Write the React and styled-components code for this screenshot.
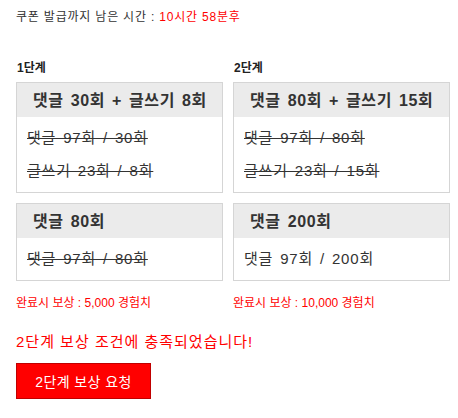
import React from "react";
import styled, { createGlobalStyle } from "styled-components";

const GlobalStyle = createGlobalStyle`
  body {
    margin: 0;
    background: #fff;
    font-family: "Liberation Sans", "Noto Sans CJK KR", sans-serif;
    color: #333;
  }
`;

const stages = [
  {
    label: "1단계",
    width: 207,
    reward: "5,000",
    missions: [
      {
        title: "댓글 30회 + 글쓰기 8회",
        lines: [
          { text: "댓글 97회 / 30회", done: true },
          { text: "글쓰기 23회 / 8회", done: true },
        ],
      },
      {
        title: "댓글 80회",
        lines: [{ text: "댓글 97회 / 80회", done: true }],
      },
    ],
  },
  {
    label: "2단계",
    width: 217,
    reward: "10,000",
    missions: [
      {
        title: "댓글 80회 + 글쓰기 15회",
        lines: [
          { text: "댓글 97회 / 80회", done: true },
          { text: "글쓰기 23회 / 15회", done: true },
        ],
      },
      {
        title: "댓글 200회",
        lines: [{ text: "댓글 97회 / 200회", done: false }],
      },
    ],
  },
];

const App = () => {
  return (
    <Page>
      <GlobalStyle />
      <Timer>
        쿠폰 발급까지 남은 시간 : <Red>10시간 58분후</Red>
      </Timer>
      <Stages>
        {stages.map((stage) => (
          <Column key={stage.label} $width={stage.width}>
            <StageLabel>{stage.label}</StageLabel>
            {stage.missions.map((m) => (
              <Card key={m.title}>
                <CardHead>{m.title}</CardHead>
                <CardBody>
                  {m.lines.map((l) => (
                    <Line key={l.text} $done={l.done}>
                      {l.text}
                    </Line>
                  ))}
                </CardBody>
              </Card>
            ))}
            <Reward>완료시 보상 : {stage.reward} 경험치</Reward>
          </Column>
        ))}
      </Stages>
      <Notice>2단계 보상 조건에 충족되었습니다!</Notice>
      <RequestButton>2단계 보상 요청</RequestButton>
    </Page>
  );
};

const Page = styled.div`
  padding: 10px 16px 16px;
`;

const Timer = styled.div`
  font-size: 12px;
  line-height: 14px;
  letter-spacing: 0.8px;
  color: #333;
`;

const Red = styled.span`
  color: #ff0000;
`;

const Stages = styled.div`
  display: flex;
  gap: 10px;
  margin-top: 37px;
`;

const Column = styled.div`
  width: ${(p) => p.$width}px;
  flex-shrink: 0;
  display: flex;
  flex-direction: column;
`;

const StageLabel = styled.div`
  font-size: 12px;
  font-weight: bold;
  line-height: 14px;
  color: #222;
  padding-left: 1px;
  margin-bottom: 7px;
`;

const Card = styled.div`
  border: 1px solid #d5d5d5;
  margin-bottom: 10px;
`;

const CardHead = styled.div`
  background: #ebebeb;
  height: 34px;
  line-height: 35px;
  padding-left: 16px;
  font-size: 16px;
  font-weight: bold;
  letter-spacing: 0.6px;
  word-spacing: 2px;
  color: #333;
  white-space: nowrap;
`;

const CardBody = styled.div`
  padding: 4px 10px 5px;
`;

const Line = styled.div`
  height: 33px;
  line-height: 33px;
  font-size: 15px;
  letter-spacing: 0.8px;
  word-spacing: 2px;
  color: #333;
  text-decoration: ${(p) => (p.$done ? "line-through" : "none")};
  white-space: nowrap;
`;

const Reward = styled.div`
  margin-top: 5px;
  font-size: 12px;
  line-height: 14px;
  color: #ff0000;
`;

const Notice = styled.div`
  margin-top: 23px;
  font-size: 15px;
  line-height: 18px;
  letter-spacing: 1px;
  color: #ff0000;
`;

const RequestButton = styled.button`
  margin-top: 12px;
  width: 135px;
  height: 36px;
  background: #ff0000;
  border: 1px solid #c00000;
  color: #fff;
  font-family: inherit;
  font-size: 14px;
  letter-spacing: 0.4px;
  padding: 0;
  cursor: pointer;
`;

export default App;
